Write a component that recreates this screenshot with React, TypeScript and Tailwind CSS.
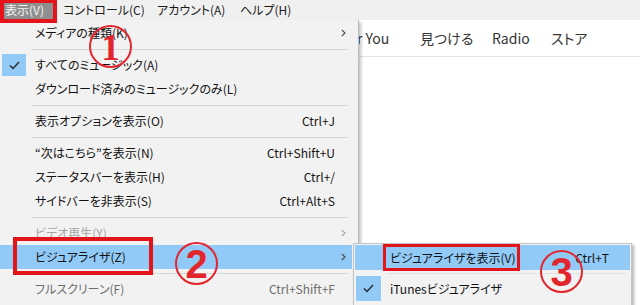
import React from "react";

const FONT = "font-['Noto_Sans_CJK_JP','Noto_Sans',sans-serif] [font-feature-settings:'palt']";

function Check() {
  return (
    <svg width="11" height="9" viewBox="0 0 11 9">
      <path d="M1 4.5 L4 7.5 L10 1" fill="none" stroke="#2b2b2b" strokeWidth="1.5" />
    </svg>
  );
}

function Chevron({ color = "#444" }: { color?: string }) {
  return (
    <svg width="5" height="8" viewBox="0 0 5 8">
      <path d="M0.8 0.8 L4 4 L0.8 7.2" fill="none" stroke={color} strokeWidth="1.1" />
    </svg>
  );
}

type RowProps = {
  label: string;
  shortcut?: string;
  arrow?: boolean;
  checked?: boolean;
  hl?: boolean;
  color?: string;
};

function Row({ label, shortcut, arrow, checked, hl, color = "#111111" }: RowProps) {
  return (
    <div className={`flex h-[24px] w-[352px] items-center ${hl ? "bg-[#91c9f7]" : ""}`}>
      <div className="flex h-full w-[35px] items-center pl-[2px]">
        {checked && (
          <div className="flex h-[22px] w-[24px] items-center justify-center bg-[#91c9f7]">
            <Check />
          </div>
        )}
      </div>
      <div className="flex-1 text-[12px] leading-none" style={{ color }}>
        {label}
      </div>
      <div className="text-right text-[12px] leading-none" style={{ color }}>
        {shortcut}
      </div>
      <div className="flex w-[17px] justify-center">
        {arrow && <Chevron color={color === "#111111" ? "#444" : color} />}
      </div>
    </div>
  );
}

function Sep() {
  return (
    <div className="flex h-[8px] w-[352px] items-center pl-[32px] pr-[4px]">
      <div className="h-px w-full bg-[#d7d7d7]" />
    </div>
  );
}

export default function App() {
  return (
    <div className={`relative h-[305px] w-[640px] overflow-hidden bg-white ${FONT}`}>
      {/* menu bar */}
      <div className="flex h-[20px] items-center bg-[#f0f0f0] text-[12px] leading-none text-[#1a1a1a]">
        <div className="flex h-full w-[57px] items-center bg-[#8f8f8f] pl-[5px] text-[#f4f4f4]">表示(V)</div>
        <div className="w-[94px] pl-[6px]">コントロール(C)</div>
        <div className="w-[83px] pl-[6px]">アカウント(A)</div>
        <div className="pl-[6px]">ヘルプ(H)</div>
      </div>
      {/* nav bar */}
      <div className="flex h-[37px] items-center border-b border-[#e3e3e3] pl-[341px] text-[14px] leading-none text-[#333]">
        <div className="w-[79px]">For You</div>
        <div className="w-[72px]">見つける</div>
        <div className="w-[59px]">Radio</div>
        <div>ストア</div>
      </div>

      {/* dropdown */}
      <div className="absolute left-0 top-[20px] h-[300px] w-[359px] border-r border-[#bdbdbd] bg-[#f2f2f2] pt-[1px] shadow-[2px_2px_3px_rgba(0,0,0,0.25)]">
        <Row label="メディアの種類(K)" arrow />
        <Sep />
        <Row label="すべてのミュージック(A)" checked />
        <Row label="ダウンロード済みのミュージックのみ(L)" />
        <Sep />
        <Row label="表示オプションを表示(O)" shortcut="Ctrl+J" />
        <Sep />
        <Row label="“次はこちら”を表示(N)" shortcut="Ctrl+Shift+U" />
        <Row label="ステータスバーを表示(H)" shortcut="Ctrl+/" />
        <Row label="サイドバーを非表示(S)" shortcut="Ctrl+Alt+S" />
        <Sep />
        <Row label="ビデオ再生(Y)" arrow color="#a6a6a6" />
        <Row label="ビジュアライザ(Z)" arrow hl />
        <Sep />
        <Row label="フルスクリーン(F)" shortcut="Ctrl+Shift+F" color="#6d6d6d" />
      </div>

      {/* submenu */}
      <div className="absolute left-[353px] top-[243px] h-[70px] w-[279px] border border-[#c4c4c4] bg-[#f2f2f2] p-[1px] shadow-[2px_2px_3px_rgba(0,0,0,0.3)]">
        <div className="flex h-[25px] items-center bg-[#91c9f7]">
          <div className="w-[35px]" />
          <div className="flex-1 text-[12px] leading-none text-[#111111]">ビジュアライザを表示(V)</div>
          <div className="pr-[21px] text-[12px] leading-none text-[#111111]">Ctrl+T</div>
        </div>
        <div className="flex h-[6px] items-center pl-[32px] pr-[4px]">
          <div className="h-px w-full bg-[#e2e2e2]" />
        </div>
        <div className="flex h-[25px] items-center">
          <div className="flex h-full w-[35px] items-center pl-[1px]">
            <div className="flex h-[25px] w-[25px] items-center justify-center bg-[#91c9f7]">
              <Check />
            </div>
          </div>
          <div className="flex-1 text-[12px] leading-none text-[#111111]">iTunesビジュアライザ</div>
        </div>
      </div>

      {/* red boxes */}
      <div className="absolute left-0 top-[-1px] h-[24px] w-[57px] border-[4px] border-[#e5141b]" />
      <div className="absolute left-[13px] top-[237px] h-[38px] w-[140px] border-[4px] border-[#e5141b]" />
      <div className="absolute left-[383px] top-[244px] h-[27px] w-[137px] border-[3px] border-[#e5141b]" />

      {/* circled numbers */}
      <div className="absolute left-[89px] top-[25px] flex h-[43px] w-[43px] items-center justify-center rounded-full border-2 border-[#e3262d] pt-[2px] font-['Liberation_Serif',serif] text-[37px] font-bold leading-none text-[#e3262d]">
        1
      </div>
      <div className="absolute left-[175px] top-[242px] flex h-[43px] w-[43px] items-center justify-center rounded-full border-2 border-[#e3262d] pt-[1px] font-['Liberation_Sans',sans-serif] text-[40px] font-bold leading-none text-[#e3262d]">
        2
      </div>
      <div className="absolute left-[540px] top-[250px] flex h-[43px] w-[43px] items-center justify-center rounded-full border-2 border-[#e3262d] pt-[1px] font-['Liberation_Sans',sans-serif] text-[40px] font-bold leading-none text-[#e3262d]">
        3
      </div>
    </div>
  );
}
